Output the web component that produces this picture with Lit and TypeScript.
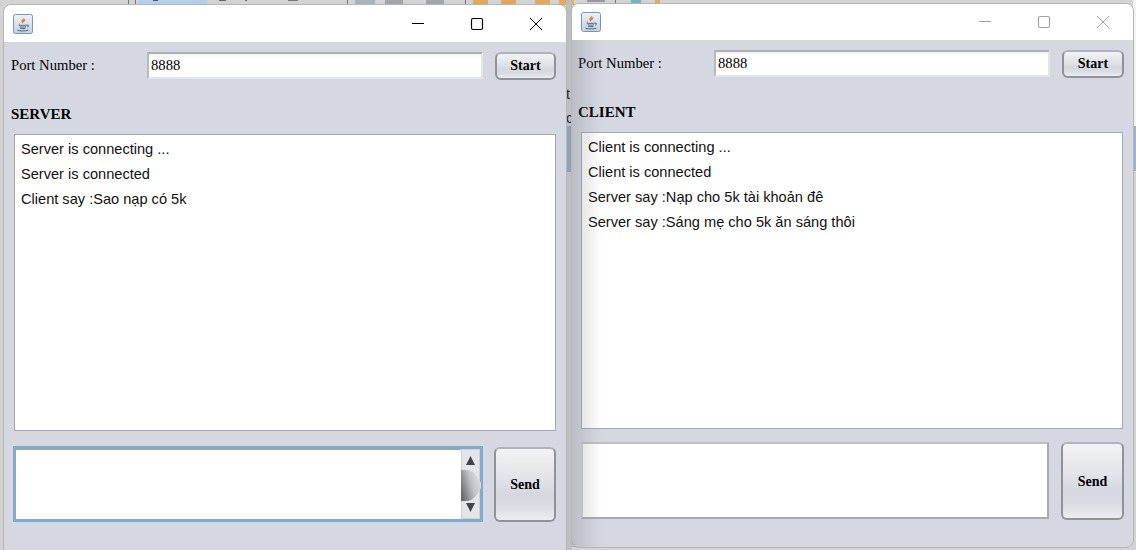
import { LitElement, html, css } from "lit";
import { customElement, property } from "lit/decorators.js";

const javaIcon = html`<svg class="java" viewBox="0 0 20 20" width="20" height="20" aria-hidden="true">
  <defs><linearGradient id="jb" x1="0" y1="0" x2="0" y2="1"><stop offset="0" stop-color="#eef2f7"/><stop offset="1" stop-color="#c5d1df"/></linearGradient></defs>
  <rect x=".5" y=".5" width="19" height="19" rx="2" fill="url(#jb)" stroke="#7f93aa"/>
  <path d="M10.8 2.5c1 2-2.9 3-2.3 5.3.2.9.8 1.6 1.4 2.2-.2-1.2.4-1.8 1.5-2.6 1.2-.9 1.3-2 .2-3 .1 1-.5 1.4-1 1.7.5-1.2.4-2.6 .2-3.6z" fill="#e57a2c"/>
  <path d="M6.8 8.6c-.8 1.2-.6 2 .2 2.4" fill="none" stroke="#eda36c" stroke-width="1"/>
  <path d="M5.6 11c1.6.6 6.8.6 8.4 0M6.6 12.8c1.6.5 4.8.5 6.4 0M7.2 14.4c1.4.4 3.8.4 5.2 0M4.4 16.2c2.6 1 8.2 1 11 0M14 11.2c2-.5 2.2 1.4.1 2" fill="none" stroke="#456b8c" stroke-width="1"/>
</svg>`;

@customElement("java-window")
class JavaWindow extends LitElement {
  @property() heading = "SERVER";
  @property({ type: Array }) lines: string[] = [];
  @property({ type: Boolean }) active = false;

  static styles = css`
    :host { display: block; width: 100%; height: 100%; }
    .frame { box-sizing: border-box; height: 100%; display: flex; flex-direction: column; border: 1px solid #b4b6ba; border-radius: 8px; overflow: hidden; background: #d5d8e1; }
    .title { flex: none; height: 37px; background: #fff; display: flex; align-items: center; padding-left: 9px; }
    .inactive .title { height: 36px; }
    .java { flex: none; }
    .controls { margin-left: auto; display: flex; height: 100%; padding-right: 1px; }
    .ctl { width: 59px; display: flex; align-items: center; justify-content: center; }
    .ctl svg { display: block; stroke: #000; fill: none; }
    .inactive .ctl svg { stroke: #a3a3a3; }
    .body { flex: 1; display: flex; flex-direction: column; padding: 10px 10px 0 7px; }
    .inactive .body { padding: 10px 9px 0 6px; }
    .port { display: flex; align-items: flex-start; height: 28px; }
    .label { font: 14.67px/27px "Liberation Serif", serif; color: #000; width: 136px; flex: none; }
    .field { box-sizing: border-box; flex: none; width: 336px; height: 27px; background: linear-gradient(#f1f1f2, #fff 4px); border: 2px solid #e4e5e8; border-top-color: #aeafb2; border-left-color: #b9babd; padding-left: 2px; font: 14.67px/22px "Liberation Serif", serif; color: #000; }
    .btn { box-sizing: border-box; flex: none; border: 2px solid #8f9298; border-top-color: #b0b3b9; border-radius: 6px; background: linear-gradient(#f2f3f5 0%, #e2e4e9 40%, #d4d7df 65%, #dcdfe5 85%, #eceef1 100%); font: bold 14px "Liberation Serif", serif; color: #000; display: flex; align-items: center; justify-content: center; }
    .start { width: 61px; height: 28px; margin-left: 12px; }
    .inactive .start { width: 62px; }
    .heading { font: bold 15px "Liberation Serif", serif; color: #000; margin-top: 25px; height: 18px; line-height: 18px; }
    .log { box-sizing: border-box; height: 297px; margin: 11px 0 0 3px; background: #fff; border: 1px solid #a6a8ae; padding: 2px 6px; font: 14.6px/25px "Liberation Sans", Arial, sans-serif; color: #111; }
    .inactive .log { margin-right: 1px; }
    .bottom { display: flex; align-items: stretch; height: 76px; margin: 15px 0 0 2px; }
    .inactive .bottom { height: 78px; margin-top: 13px; }
    .entry { box-sizing: border-box; flex: none; width: 470px; background: #fff; border: 3px solid #84a9d0; display: flex; justify-content: flex-end; box-shadow: inset 0 1px 0 #a0a3aa; }
    .inactive .entry { width: 468px; margin-left: 1px; height: 77px; border: 2px solid #a8aab0; border-top-color: #bdbfc4; border-left-color: #cfd0d5; box-shadow: none; }
    .bar { width: 19px; height: 100%; background: #e4e5e9; border: 1px solid #cfd1d6; position: relative; display: flex; flex-direction: column; align-items: center; justify-content: space-between; padding: 6px 0; box-sizing: border-box; }
    .bar svg { display: block; }
    .thumb { position: absolute; left: -1px; top: 20px; }
    .send { width: 62px; margin-left: 11px; margin-top: 1px; }
    .inactive .send { width: 63px; margin-left: 12px; margin-top: 0; padding-top: 2px; }
  `;

  render() {
    const active = this.active;
    return html`<div class="frame ${active ? "" : "inactive"}">
      <div class="title">
        ${javaIcon}
        <div class="controls">
          <div class="ctl"><svg width="14" height="14" viewBox="0 0 14 14"><path d="M1 6.5h12"/></svg></div>
          <div class="ctl"><svg width="14" height="14" viewBox="0 0 14 14"><rect x="1.5" y="1.5" width="11" height="11" rx="1.5" stroke-width="1.2"/></svg></div>
          <div class="ctl"><svg width="14" height="14" viewBox="0 0 14 14"><path d="M1 1l12 12M13 1L1 13"/></svg></div>
        </div>
      </div>
      <div class="body">
        <div class="port">
          <div class="label">Port Number :</div>
          <div class="field">8888</div>
          <div class="btn start">Start</div>
        </div>
        <div class="heading">${this.heading}</div>
        <div class="log">${this.lines.map((l) => html`<div>${l}</div>`)}</div>
        <div class="bottom">
          <div class="entry">
            ${active
              ? html`<div class="bar">
                  <svg width="9" height="9" viewBox="0 0 9 9"><path d="M4.5 0L9 9H0z" fill="#444"/></svg>
                  <svg class="thumb" width="20" height="31" viewBox="0 0 20 31">
                    <defs><linearGradient id="th" x1="0" y1=".75" x2="1" y2=".3"><stop offset="0" stop-color="#68696c"/><stop offset=".55" stop-color="#c0c1c5"/><stop offset="1" stop-color="#dfe0e4"/></linearGradient></defs>
                    <path d="M0 0h5c8 0 12 8 15 13v5c-3 5-7 13-15 13H0z" fill="url(#th)"/>
                  </svg>
                  <svg width="9" height="9" viewBox="0 0 9 9"><path d="M4.5 9L9 0H0z" fill="#444"/></svg>
                </div>`
              : ""}
          </div>
          <div class="btn send">Send</div>
        </div>
      </div>
    </div>`;
  }
}

const bits: [number, number, number, string][] = [
  [128, 1, 4, "#777"], [135, 1, 4, "#777"], [138, 69, 4, "#b6cfe8"], [153, 5, 1, "#555"], [219, 7, 1, "#666"],
  [245, 2, 1, "#666"], [288, 10, 1, "#777"], [347, 1, 4, "#777"], [355, 20, 4, "#a9b1b9"], [385, 18, 4, "#a2a5a9"],
  [426, 18, 4, "#a2a5a9"], [465, 1, 4, "#777"], [473, 15, 4, "#e0a85c"], [501, 15, 4, "#e0a85c"], [535, 15, 4, "#e0a85c"],
  [559, 15, 5, "#e3ab5e"], [587, 18, 2, "#999"], [615, 1, 3, "#777"], [631, 10, 3, "#74b2c4"], [655, 5, 3, "#e0a85c"],
];

@customElement("app-root")
class AppRoot extends LitElement {
  static styles = css`
    :host { display: block; position: relative; width: 1136px; height: 550px; overflow: hidden; background: #d3d3d3; }
    .bit { position: absolute; top: 0; }
    .gap { position: absolute; left: 566px; width: 6px; top: 0; height: 550px; background: #bdbec0; }
    .side { position: absolute; left: 566px; width: 6px; top: 126px; height: 46px; background: #8fa0bb; }
    .side2 { position: absolute; left: 1133px; width: 3px; top: 126px; height: 45px; background: #9fb0c9; }
    .edge { position: absolute; left: 1133px; width: 3px; top: 0; height: 126px; background: #f2f2f2; }
    .peek { position: absolute; left: 566px; width: 6px; overflow: hidden; font: 14px "Liberation Sans", sans-serif; color: #222; height: 17px; line-height: 17px; }
    .win { position: absolute; }
    .left { left: 3px; top: 4px; width: 564px; height: 560px; }
    .right { left: 571px; top: 3px; width: 563px; height: 545px; }
    .fade { position: absolute; left: 572px; top: 40px; width: 30px; height: 507px; background: linear-gradient(90deg, rgba(120,122,128,.28), rgba(120,122,128,0)); pointer-events: none; }
  `;

  render() {
    return html`
      ${bits.map(([x, w, h, c]) => html`<div class="bit" style="left:${x}px;width:${w}px;height:${h}px;background:${c}"></div>`)}
      <div class="gap"></div>
      <div class="edge"></div>
      <div class="side"></div>
      <div class="side2"></div>
      <div class="peek" style="top:86px">t</div>
      <div class="peek" style="top:110px">c</div>
      <java-window class="win left" active heading="SERVER"
        .lines=${["Server is connecting ...", "Server is connected", "Client say :Sao nạp có 5k"]}></java-window>
      <java-window class="win right" heading="CLIENT"
        .lines=${["Client is connecting ...", "Client is connected", "Server say :Nạp cho 5k tài khoản đê", "Server say :Sáng mẹ cho 5k ăn sáng thôi"]}></java-window>
      <div class="fade"></div>
    `;
  }
}
